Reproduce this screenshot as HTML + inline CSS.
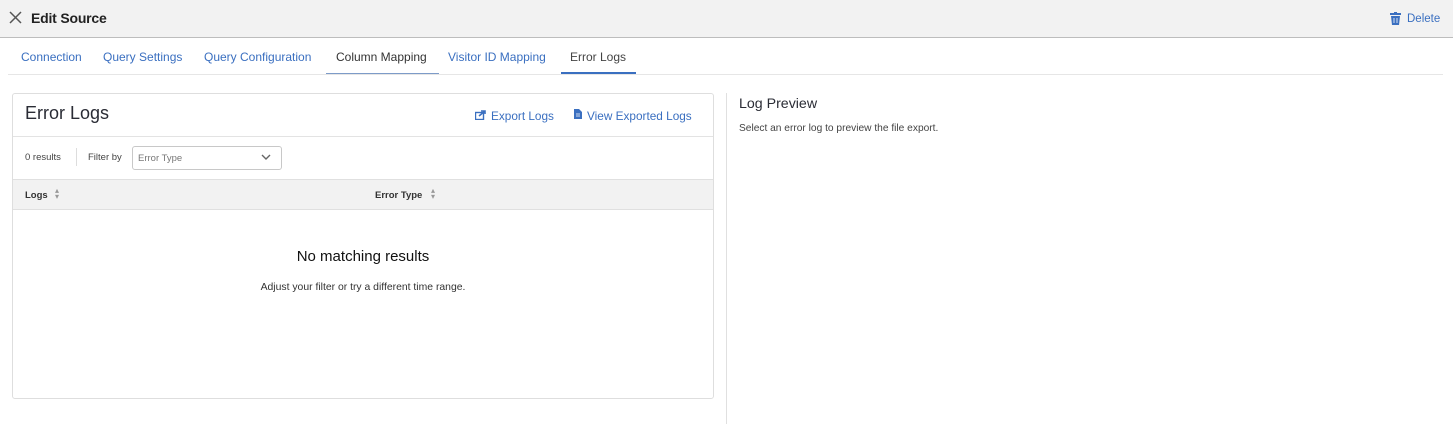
<!DOCTYPE html>
<html><head><style>
*{box-sizing:border-box;margin:0;padding:0}
body{width:1453px;height:424px;overflow:hidden;background:#fff;font-family:"Liberation Sans",sans-serif;color:#2a2c35;position:relative}
.hdr{position:absolute;left:0;top:0;width:1453px;height:38px;background:#f2f2f2;border-bottom:1px solid #bdbdbd}
.a{position:absolute;white-space:nowrap}
.blue{color:#3a6fc0}
.t{top:50px;font-size:12px}
</style></head><body>
<div class="hdr"></div>
<svg class="a" style="left:9px;top:11px" width="13" height="13"><path d="M1 1L12 12M12 1L1 12" stroke="#555" stroke-width="1.5"/></svg>
<div class="a" style="left:31px;top:10px;font-size:14px;font-weight:bold;color:#222;letter-spacing:-0.2px">Edit Source</div>
<svg class="a" style="left:1390px;top:12px" width="11" height="13"><rect x="0" y="1" width="11" height="2" fill="#3a6fc0"/><rect x="4" y="0" width="3" height="2" fill="#3a6fc0"/><path d="M1 4H10L9 13H2Z" fill="#3a6fc0"/><path d="M4 6V11M7 6V11" stroke="#fff" stroke-width="0.8"/></svg>
<div class="a blue" style="left:1407px;top:13px;font-size:11.5px">Delete</div>

<div class="a blue t" style="left:21px">Connection</div>
<div class="a blue t" style="left:103px">Query Settings</div>
<div class="a blue t" style="left:204px">Query Configuration</div>
<div class="a t" style="left:336px;color:#333">Column Mapping</div>
<div class="a blue t" style="left:448px">Visitor ID Mapping</div>
<div class="a t" style="left:570px;color:#444">Error Logs</div>
<div class="a" style="left:8px;top:74px;width:1435px;height:1px;background:#e6e6e6"></div>
<div class="a" style="left:326px;top:73px;width:113px;height:1px;background:#7d9bc8"></div>
<div class="a" style="left:561px;top:72px;width:75px;height:2px;background:#3a6fc0"></div>

<div class="a" style="left:12px;top:93px;width:702px;height:306px;border:1px solid #dedede;border-radius:3px"></div>
<div class="a" style="left:25px;top:103px;font-size:18px;color:#2a2c35">Error Logs</div>
<svg class="a" style="left:475px;top:110px" width="11" height="10"><rect x="0.5" y="2.5" width="8" height="7" fill="none" stroke="#3a6fc0" stroke-width="1.4"/><path d="M4 6L10 1M6 1H10V4" stroke="#3a6fc0" stroke-width="1.6" fill="none"/></svg>
<div class="a blue" style="left:491px;top:109px;font-size:11.8px">Export Logs</div>
<svg class="a" style="left:574px;top:109px" width="8" height="10"><path d="M0 0H5L8 3V10H0Z" fill="#3a6fc0"/><path d="M2 5H6M2 7H6" stroke="#fff" stroke-width="0.8"/></svg>
<div class="a blue" style="left:587px;top:109px;font-size:11.8px">View Exported Logs</div>
<div class="a" style="left:13px;top:136px;width:700px;height:1px;background:#e3e3e3"></div>
<div class="a" style="left:25px;top:152px;font-size:9.5px;color:#444">0 results</div>
<div class="a" style="left:76px;top:148px;width:1px;height:18px;background:#ddd"></div>
<div class="a" style="left:88px;top:152px;font-size:9.5px;color:#444">Filter by</div>
<div class="a" style="left:132px;top:146px;width:150px;height:24px;border:1px solid #c8c8c8;border-radius:3px"></div>
<div class="a" style="left:138px;top:153px;font-size:9.5px;color:#777">Error Type</div>
<svg class="a" style="left:261px;top:154px" width="10" height="7"><path d="M1 1L5 5L9 1" stroke="#666" stroke-width="1.4" fill="none"/></svg>
<div class="a" style="left:13px;top:179px;width:700px;height:31px;background:#f2f2f2;border-top:1px solid #e0e0e0;border-bottom:1px solid #e0e0e0"></div>
<div class="a" style="left:25px;top:190px;font-size:9.5px;font-weight:bold;color:#333">Logs</div>
<div class="a" style="left:55px;top:188px;font-size:8px;color:#999;line-height:6px">▴<br>▾</div>
<div class="a" style="left:375px;top:190px;font-size:9.5px;font-weight:bold;color:#333">Error Type</div>
<div class="a" style="left:431px;top:188px;font-size:8px;color:#999;line-height:6px">▴<br>▾</div>
<div class="a" style="left:13px;top:248px;width:700px;text-align:center;font-size:15px;color:#111">No matching results</div>
<div class="a" style="left:13px;top:282px;width:700px;text-align:center;font-size:10.4px;color:#333">Adjust your filter or try a different time range.</div>

<div class="a" style="left:726px;top:93px;width:1px;height:331px;background:#e0e0e0"></div>
<div class="a" style="left:739px;top:96px;font-size:14.2px;color:#2a2c35">Log Preview</div>
<div class="a" style="left:739px;top:123px;font-size:10.2px;color:#444">Select an error log to preview the file export.</div>
</body></html>
